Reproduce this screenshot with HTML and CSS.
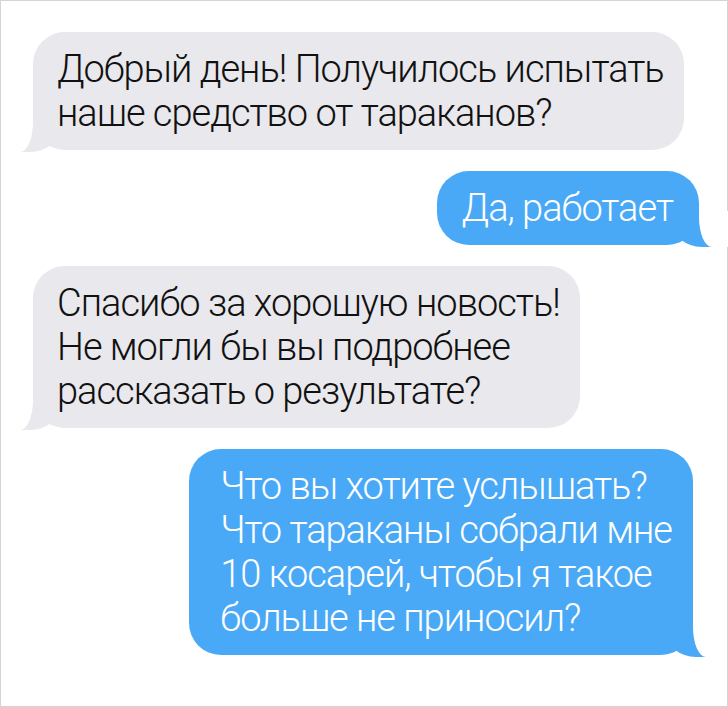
FILE: index.html
```html
<!DOCTYPE html>
<html lang="ru">
<head>
  <meta charset="UTF-8">
  <meta name="viewport" content="width=device-width, initial-scale=1.0">
  <title>Переписка</title>
  <link rel="stylesheet" href="styles.css">
</head>
<body>
  <div class="chat">
    <div class="msg them">Добрый день! Получилось испытать<br>наше средство от тараканов?</div>
    <div class="msg me">Да, работает</div>
    <div class="msg them">Спасибо за хорошую новость!<br>Не могли бы вы подробнее<br>рассказать о результате?</div>
    <div class="msg me long">Что вы хотите услышать?<br>Что тараканы собрали мне<br>10 косарей, чтобы я такое<br>больше не приносил?</div>
  </div>
</body>
</html>
```

FILE: styles.css
```css
html, body {
  margin: 0;
  background: #fff;
}
.chat {
  box-sizing: border-box;
  width: 728px;
  height: 707px;
  border: 1px solid #d4d4d4;
  padding: 31px 28px 0 32px;
  display: flex;
  flex-direction: column;
  gap: 21px;
  font-family: Roboto, "Noto Sans", sans-serif;
  font-weight: 300;
  font-size: 38px;
  letter-spacing: -1px;
  line-height: 44px;
}
.msg {
  position: relative;
  isolation: isolate;
  white-space: nowrap;
  padding: 15px 20px 15px 24px;
  border-radius: 32px;
}
.them {
  align-self: flex-start;
  background: #e8e8ed;
  color: #111;
}
.me {
  align-self: flex-end;
  background: #49a9f6;
  color: #fff;
  padding-left: 25px;
  padding-right: 26px;
}
.me.long {
  margin-right: 6px;
  padding-left: 31px;
  padding-right: 21px;
}

/* хвостики пузырей */
.msg::before, .msg::after {
  content: "";
  position: absolute;
  z-index: -1;
  bottom: -2px;
  height: 34px;
}
.them::before {
  left: -13px;
  width: 40px;
  background: #e8e8ed;
  border-bottom-right-radius: 30px 26px;
}
.them::after {
  left: -30px;
  width: 30px;
  height: 36px;
  background: #fff;
  border-bottom-right-radius: 13px 30px;
}
.me::before {
  right: -13px;
  width: 40px;
  background: #49a9f6;
  border-bottom-left-radius: 30px 26px;
}
.me::after {
  right: -30px;
  width: 30px;
  height: 36px;
  background: #fff;
  border-bottom-left-radius: 13px 30px;
}
```
